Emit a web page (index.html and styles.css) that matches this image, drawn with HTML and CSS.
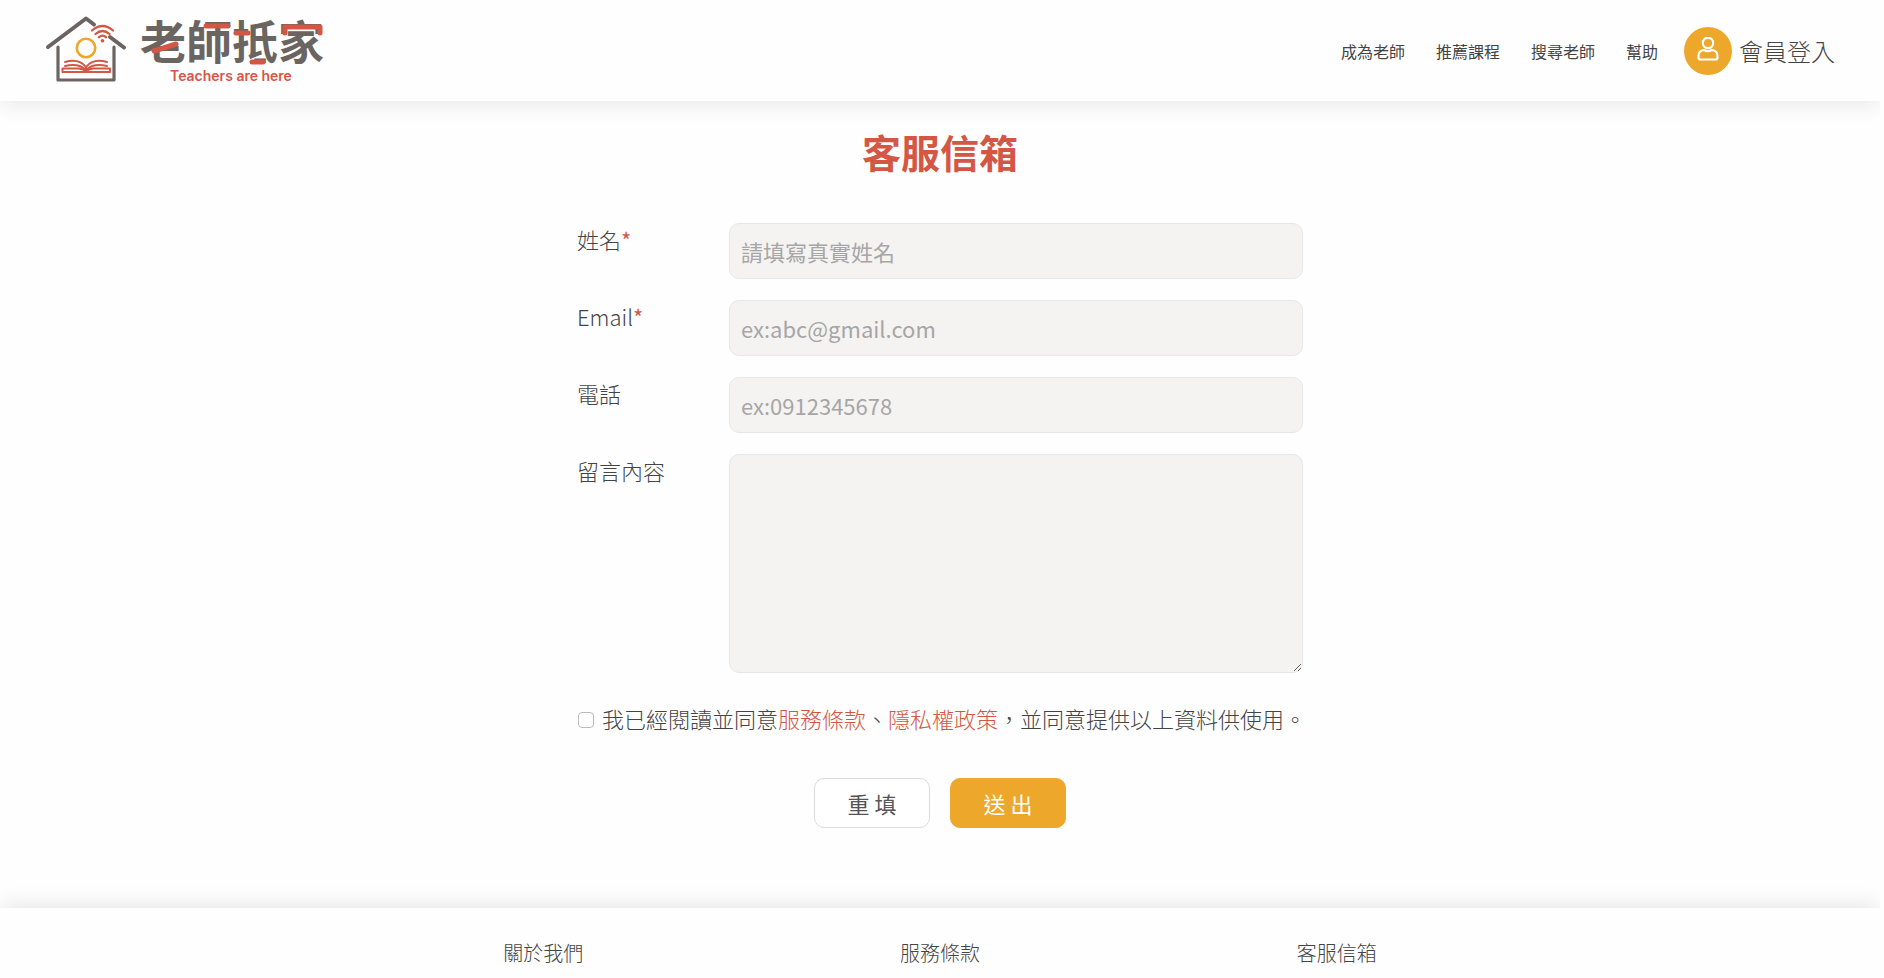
FILE: index.html
```html
<!DOCTYPE html>
<html lang="zh-Hant">
<head>
    <meta charset="UTF-8">
    <meta name="viewport" content="width=device-width, initial-scale=1.0">
    <title>客服信箱</title>
    <link rel="stylesheet" href="styles.css">
</head>
<body>
    <header class="header">
        <a href="#" class="logo">
            <svg width="280" height="76" viewBox="0 0 280 76" fill="none" stroke-linecap="round" stroke-linejoin="round">
                <!-- house -->
                <g stroke="#6b6561" stroke-width="4">
                    <path d="M3 34 L41 5.500 L49 11.500"/>
                    <path d="M65 24 L79 34.500"/>
                    <path d="M13 34 V67 H69 V34" stroke-width="3.200"/>
                </g>
                <circle cx="41" cy="35" r="9.200" stroke="#eda82b" stroke-width="2.600"/>
                <!-- wifi -->
                <g stroke="#d45745" stroke-width="2.300">
                    <path d="M47 17.500 Q57.500 8.500 68 17.500"/>
                    <path d="M50.500 21 Q57.500 15 64.500 21"/>
                    <path d="M53.800 24.300 Q57.500 21 61.200 24.300"/>
                </g>
                <circle cx="57.500" cy="27.800" r="1.800" fill="#d45745"/>
                <!-- book -->
                <g stroke="#d45745" stroke-width="2">
                    <path d="M20 49 Q34 45 41 54 Q48 45 62 49"/>
                    <path d="M20 53 Q34 50 41 57 Q48 50 62 53"/>
                    <path d="M41 54 V58"/>
                    <path d="M17.500 55.500 V59 H65 V55.500 H48 Q43 56 41 58.500 Q39 56 34 55.500 H17.500 Z"/>
                </g>
                <!-- name -->
                <text class="logo-name" x="95" y="46">老師抵家</text>
                <g stroke="#d45745" stroke-width="5">
                    <path d="M109 38 L131 31"/>
                    <path d="M161 13 H183"/>
                    <path d="M191 20 H203"/>
                    <path d="M207 49 H218"/>
                    <path d="M240 20 V14 H275 V20"/>
                </g>
                <text class="logo-sub" x="125" y="68">Teachers are here</text>
            </svg>
        </a>
        <nav class="nav">
            <ul>
                <li><a href="#">成為老師</a></li>
                <li><a href="#">推薦課程</a></li>
                <li><a href="#">搜尋老師</a></li>
                <li><a href="#">幫助</a></li>
            </ul>
            <a href="#" class="login">
                <span class="avatar">
                    <svg width="24" height="28" viewBox="0 0 24 28" fill="none" stroke="#fff" stroke-width="2.200" stroke-linejoin="round">
                        <circle cx="12" cy="6" r="5.200"/>
                        <path d="M8 13 C4.500 13.500 2.500 16 2.500 19 V20.500 Q2.500 22.500 4.500 22.500 H19.500 Q21.500 22.500 21.500 20.500 V19 C21.500 16 19.500 13.500 16 13 Q12 15.500 8 13 Z"/>
                    </svg>
                </span>
                <span>會員登入</span>
            </a>
        </nav>
    </header>

    <main class="main">
        <h1>客服信箱</h1>
        <form class="contact-form">
            <div class="row">
                <label for="name">姓名<span class="required">*</span></label>
                <input type="text" id="name" name="name" placeholder="請填寫真實姓名">
            </div>
            <div class="row">
                <label for="email">Email<span class="required">*</span></label>
                <input type="email" id="email" name="email" placeholder="ex:abc@gmail.com">
            </div>
            <div class="row">
                <label for="phone">電話</label>
                <input type="tel" id="phone" name="phone" placeholder="ex:0912345678">
            </div>
            <div class="row">
                <label for="message">留言內容</label>
                <textarea id="message" name="message"></textarea>
            </div>
            <div class="agree">
                <input type="checkbox" id="agree" name="agree">
                <label for="agree">我已經閱讀並同意<a href="#">服務條款</a>、<a href="#">隱私權政策</a>，並同意提供以上資料供使用。</label>
            </div>
            <div class="buttons">
                <button type="reset" class="btn">重 填</button>
                <button type="submit" class="btn btn-send">送 出</button>
            </div>
        </form>
    </main>

    <footer class="footer">
        <ul>
            <li><a href="#">關於我們</a></li>
            <li><a href="#">服務條款</a></li>
            <li><a href="#">客服信箱</a></li>
        </ul>
    </footer>
</body>
</html>
```
FILE: styles.css
```css
* {
    box-sizing: border-box;
}

html {
    background-color: #fefefe;
}

body {
    margin: 0 4px 0 0;
    min-height: 100vh;
    display: flex;
    flex-direction: column;
    font-family: "Noto Sans CJK TC", sans-serif;
    font-weight: 300;
    font-size: 22px;
    line-height: 32px;
    color: #444;
}

a {
    color: inherit;
    text-decoration: none;
}

ul {
    list-style: none;
    margin: 0;
    padding: 0;
}

/* header */
.header {
    display: flex;
    justify-content: space-between;
    align-items: center;
    height: 101px;
    padding: 0 45px;
    background-color: #fefefe;
    box-shadow: 0 4px 20px rgba(0, 0, 0, 0.09);
}

.logo svg {
    display: block;
    overflow: visible;
}

.logo-name {
    font-size: 46px;
    font-weight: 700;
    fill: #6b6561;
}

.logo-sub {
    font-family: Inter, Arial, sans-serif;
    font-size: 14px;
    font-weight: 600;
    fill: #d45745;
}

.nav {
    display: flex;
    align-items: center;
    gap: 26px;
}

.nav ul {
    display: flex;
    gap: 31px;
    font-size: 16px;
    font-weight: 400;
}

.login {
    display: flex;
    align-items: center;
    gap: 7px;
    font-size: 24px;
}

.avatar {
    display: flex;
    justify-content: center;
    align-items: center;
    width: 48px;
    height: 48px;
    border-radius: 50%;
    background-color: #eda82b;
}

/* contact form */
.main {
    flex: 1;
    padding: 22px 20px 78px;
}

h1 {
    margin: 0 0 44px;
    font-size: 39px;
    line-height: 56px;
    font-weight: 700;
    text-align: center;
    color: #d45745;
}

.contact-form {
    max-width: 726px;
    margin: 0 auto;
}

.row {
    display: flex;
    margin-bottom: 21px;
}

.row label {
    width: 152px;
}

.row input,
.row textarea {
    flex: 1;
    height: 56px;
    padding: 0 11px;
    border: 1px solid #e8e7e5;
    border-radius: 10px;
    background-color: #f4f3f1;
    font-family: inherit;
    font-size: 22px;
    font-weight: 400;
    color: #444;
}

.row textarea {
    height: 219px;
    resize: vertical;
}

.row input::placeholder {
    color: #a6a6a6;
}

.required,
.agree a {
    color: #d45745;
}

.required {
    font-weight: 400;
}

.agree {
    display: flex;
    align-items: center;
    gap: 8px;
    margin-top: 29px;
    white-space: nowrap;
}

.agree input {
    appearance: none;
    flex-shrink: 0;
    width: 16px;
    height: 16px;
    margin: 4px 0 0 1px;
    border: 1px solid #bbb;
    border-radius: 4px;
    background-color: #fff;
}

.agree input:checked {
    background-color: #eda82b;
}

.buttons {
    display: flex;
    justify-content: center;
    gap: 20px;
    margin-top: 44px;
}

.btn {
    width: 116px;
    height: 50px;
    padding: 0;
    border: 1px solid #ddd;
    border-radius: 10px;
    background-color: #fff;
    font-family: inherit;
    font-size: 22px;
    font-weight: 400;
    color: #555;
    cursor: pointer;
}

.btn-send {
    border-color: #eda82b;
    background-color: #eda82b;
    color: #fff;
}

/* footer */
.footer {
    padding: 29px 0 9px;
    background-color: #fefefe;
    box-shadow: 0 -4px 20px rgba(0, 0, 0, 0.09);
}

.footer ul {
    display: grid;
    grid-template-columns: repeat(3, 1fr);
    max-width: 1190px;
    margin: 0 auto;
    font-size: 20px;
    text-align: center;
}
```
